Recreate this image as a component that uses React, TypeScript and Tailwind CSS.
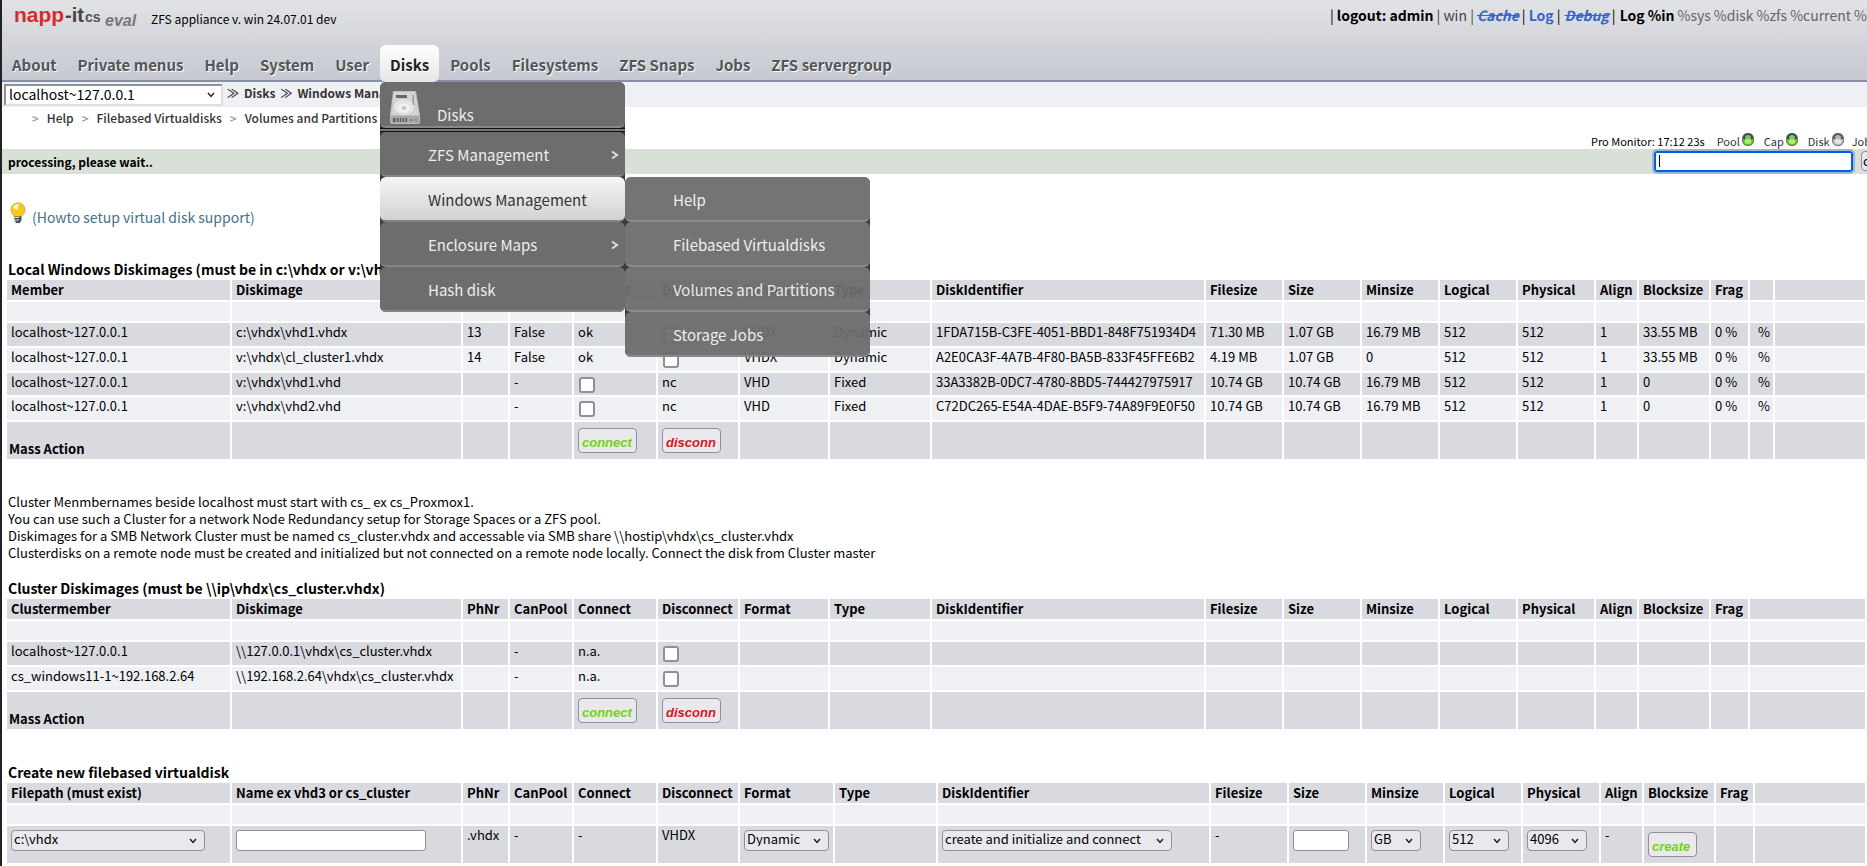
import type { ReactNode } from 'react'

const nav = ['About', 'Private menus', 'Help', 'System', 'User', 'Disks', 'Pools', 'Filesystems', 'ZFS Snaps', 'Jobs', 'ZFS servergroup']

const headers = ['PhNr', 'CanPool', 'Connect', 'Disconnect', 'Format', 'Type', 'DiskIdentifier', 'Filesize', 'Size', 'Minsize', 'Logical', 'Physical', 'Align', 'Blocksize', 'Frag']

const colsLocal = [223, 229, 45, 62, 82, 80, 88, 100, 272, 76, 76, 76, 76, 76, 41, 70, 37, 23]
const colsCreate = [223, 229, 45, 62, 82, 80, 93, 101, 271, 76, 76, 76, 76, 76, 41, 70, 37]

function Check({ name }: { name: string }) {
  return (
    <input
      type="checkbox"
      aria-label={name}
      className="block appearance-none w-4 h-4 mt-1 ml-px rounded-[3px] border-2 border-[#8f8f9d] bg-white"
    />
  )
}

function ImgButton({ label, style }: { label: string; style: string }) {
  return (
    <button
      className={`block h-[25px] pl-[3px] pt-1 text-left rounded border border-[#8f8f9d] bg-[#e9e9ed] font-['Liberation_Sans',sans-serif] text-[13px] leading-4 italic font-bold ${style}`}
    >
      {label}
    </button>
  )
}

function Grid({ cols, head, rows, rowHeights }: { cols: number[]; head: string[]; rows: ReactNode[][]; rowHeights: string[] }) {
  const cells = cols.length + 1
  return (
    <table className="table-fixed w-full border-separate border-spacing-[2px]">
      <colgroup>
        {cols.map((w, i) => (
          <col key={i} style={{ width: w }} />
        ))}
        <col />
      </colgroup>
      <thead>
        <tr className="h-5 bg-[#d9dae0]">
          {Array.from({ length: cells }).map((_, i) => (
            <th key={i} className="p-0 pl-1 text-left font-bold whitespace-nowrap">
              {head[i]}
            </th>
          ))}
        </tr>
      </thead>
      <tbody>
        <tr className="h-[19px] bg-[#eff0f4]">
          {Array.from({ length: cells }).map((_, i) => (
            <td key={i} className="p-0" />
          ))}
        </tr>
        {rows.map((row, r) => (
          <tr key={r} className={`${rowHeights[r]} ${r % 2 ? 'bg-[#eff0f4]' : 'bg-[#d9dae0]'}`}>
            {Array.from({ length: cells }).map((_, i) => (
              <td key={i} className="p-0 pl-1 align-top whitespace-nowrap">
                {row[i]}
              </td>
            ))}
          </tr>
        ))}
      </tbody>
    </table>
  )
}

function massRow(id: string): ReactNode[] {
  return [
    <b key={id} className="block -ml-0.5 pt-[18px]">Mass Action</b>,
    '', '', '',
    <div key="c" className="pt-[6px]"><ImgButton label="connect" style="w-[59px] text-[#73d216]" /></div>,
    <div key="d" className="pt-[6px]"><ImgButton label="disconn" style="w-[59px] text-[#d3181f]" /></div>,
  ]
}

const host = 'localhost~127.0.0.1'

const localRows: ReactNode[][] = [
  [host, 'c:\\vhdx\\vhd1.vhdx', '13', 'False', 'ok', <Check key="k" name="Disconnect vhd1.vhdx" />, 'VHDX', 'Dynamic', '1FDA715B-C3FE-4051-BBD1-848F751934D4', '71.30 MB', '1.07 GB', '16.79 MB', '512', '512', '1', '33.55 MB', '0 %', <span key="p" className="ml-1">%</span>],
  [host, 'v:\\vhdx\\cl_cluster1.vhdx', '14', 'False', 'ok', <Check key="k" name="Disconnect cl_cluster1.vhdx" />, 'VHDX', 'Dynamic', 'A2E0CA3F-4A7B-4F80-BA5B-833F45FFE6B2', '4.19 MB', '1.07 GB', '0', '512', '512', '1', '33.55 MB', '0 %', <span key="p" className="ml-1">%</span>],
  [host, 'v:\\vhdx\\vhd1.vhd', '', '-', <Check key="k" name="Connect vhd1.vhd" />, 'nc', 'VHD', 'Fixed', '33A3382B-0DC7-4780-8BD5-744427975917', '10.74 GB', '10.74 GB', '16.79 MB', '512', '512', '1', '0', '0 %', <span key="p" className="ml-1">%</span>],
  [host, 'v:\\vhdx\\vhd2.vhd', '', '-', <Check key="k" name="Connect vhd2.vhd" />, 'nc', 'VHD', 'Fixed', 'C72DC265-E54A-4DAE-B5F9-74A89F9E0F50', '10.74 GB', '10.74 GB', '16.79 MB', '512', '512', '1', '0', '0 %', <span key="p" className="ml-1">%</span>],
  massRow('local'),
]

const clusterRows: ReactNode[][] = [
  [host, '\\\\127.0.0.1\\vhdx\\cs_cluster.vhdx', '', '-', 'n.a.', <Check key="k" name="Disconnect 127.0.0.1" />],
  ['cs_windows11-1~192.168.2.64', '\\\\192.168.2.64\\vhdx\\cs_cluster.vhdx', '', '-', 'n.a.', <Check key="k" name="Disconnect 192.168.2.64" />],
  massRow('cluster'),
]

function Chevron() {
  return (
    <svg viewBox="0 0 8 6" className="absolute right-2 top-2 w-2 h-1.5 pointer-events-none" fill="none" stroke="#222" strokeWidth="1.5">
      <path d="M1 1l3 3.4L7 1" />
    </svg>
  )
}

function Pick({ value, label, width }: { value: string; label: string; width: string }) {
  return (
    <div className={`relative mt-1 h-[21px] ${width}`}>
      <select
        aria-label={label}
        defaultValue={value}
        className="block appearance-none w-full h-full pl-0.5 pb-1 rounded border border-[#8f8f9d] bg-[#e9e9ed] leading-4"
      >
        <option>{value}</option>
      </select>
      <Chevron />
    </div>
  )
}

const createRows: ReactNode[][] = [
  [
    <Pick key="a" value="c:\vhdx" label="Filepath" width="w-[194px]" />,
    <input key="b" aria-label="Name" className="block mt-1 w-[190px] h-[21px] rounded-[3px] border border-[#8f8f9d] bg-white px-1" />,
    '.vhdx', '-', '-', 'VHDX',
    <Pick key="c" value="Dynamic" label="Format" width="w-[85px]" />,
    '',
    <Pick key="d" value="create and initialize and connect" label="Action" width="w-[230px]" />,
    '-',
    <input key="e" aria-label="Size" className="block mt-1 w-14 h-[21px] rounded-[3px] border border-[#8f8f9d] bg-white px-1" />,
    <Pick key="f" value="GB" label="Unit" width="w-[50px]" />,
    <Pick key="g" value="512" label="Logical sector" width="w-[60px]" />,
    <Pick key="h" value="4096" label="Physical sector" width="w-[60px]" />,
    '-',
    <div key="i" className="pt-[6px]"><ImgButton label="create" style="w-[49px] text-[#73d216]" /></div>,
  ],
]

function DiskIcon() {
  return (
    <svg viewBox="0 0 32 36" className="w-8 h-9">
      <path d="M4 1h23l4 24v7q0 2-2 2H3q-2 0-2-2v-7z" fill="#bdbdbd" />
      <path d="M5 2h21l4 23H2z" fill="#d4d4d4" />
      <ellipse cx="15" cy="17" rx="11" ry="8.5" fill="#e4e4e4" stroke="#c2c2c2" strokeWidth=".8" />
      <ellipse cx="15" cy="18" rx="6" ry="4.5" fill="#f2f2f2" />
      <ellipse cx="15" cy="18" rx="2.5" ry="2" fill="#c4c4c4" />
      <path d="M7 5h11v3H7z" fill="#666" />
      <path d="M24 5l.5 10" stroke="#999" strokeWidth="1.5" fill="none" />
      <path d="M2 26h28v7H2z" fill="#a8a8a8" />
      <path d="M4 28h14v4H4z" fill="#5c5c5c" />
      <path d="M7 28v4M10 28v4M13 28v4M16 28v4" stroke="#c4c4c4" />
      <path d="M21 30h3" stroke="#666" />
      <circle cx="27" cy="30" r="1.2" fill="#5aa95a" />
    </svg>
  )
}

function Bulb() {
  return (
    <svg viewBox="0 0 16 22" className="w-4 h-[22px]">
      <path d="M8 .8a7 7 0 0 0-7 7c0 3 2 4.5 3.400 7h7.200C13 12.300 15 10.800 15 7.800a7 7 0 0 0-7-7z" fill="#f7c91c" stroke="#c9a23a" strokeWidth=".8" />
      <path d="M3 6a5 4.500 0 0 1 6-4L7.500 8z" fill="#fff6c0" />
      <path d="M4.500 14.500h7V18L10 21H6l-1.500-3z" fill="#4a4f5a" />
      <path d="M5 15.500h4M5 18h4" stroke="#d5d8de" />
    </svg>
  )
}

function Led({ on }: { on: boolean }) {
  return (
    <svg viewBox="0 0 12 13" className="w-3 h-[13px]">
      <rect x=".5" y=".5" width="11" height="12" rx="4.5" fill={on ? '#58c322' : '#b9b9bd'} stroke="#777" />
      <path d="M1 6V5a5 4.500 0 0 1 10 0v1z" fill={on ? '#34502b' : '#56565a'} />
      <ellipse cx="6" cy="4.500" rx="3" ry="2.500" fill={on ? '#8fb97c' : '#b5b5b8'} />
      <ellipse cx="6" cy="8.500" rx="3.500" ry="2.500" fill={on ? '#a6ef6a' : '#e4e4e8'} />
    </svg>
  )
}

const menu = [
  { label: 'ZFS Management', sub: true },
  { label: 'Windows Management', active: true },
  { label: 'Enclosure Maps', sub: true },
  { label: 'Hash disk' },
]

const submenu = ['Help', 'Filebased Virtualdisks', 'Volumes and Partitions', 'Storage Jobs']

function DisksMenu() {
  return (
    <div className="absolute z-10 left-0 top-full flex items-start font-normal text-[#eee] [text-shadow:none]">
      <div className="w-[245px] rounded-md bg-[#3a3a3a]">
        <div className="h-[46px] pl-[9px] flex items-end gap-4 rounded-md border-b-2 border-[#888] bg-[#6d6d6d]">
          <DiskIcon />
          <a href="#disks" className="leading-[22px]">Disks</a>
        </div>
        <div className="h-1 border-y border-[#111] bg-[#777]" />
        {menu.map((m) => (
          <a
            key={m.label}
            href="#menu"
            className={`flex items-center justify-between h-[45px] pt-0.5 pl-12 pr-1.5 rounded-md border-b-2 border-[#858585] ${
              m.active ? 'bg-linear-to-b from-[#f6f6f6] to-[#d2d2d2] text-[#333]' : 'bg-[#6d6d6d]'
            }`}
          >
            {m.label}
            {m.sub && (
              <svg viewBox="0 0 8 10" className="w-2 h-2.5" fill="none" stroke="#ddd" strokeWidth="2">
                <path d="M1 1.500L6 5 1 8.500" />
              </svg>
            )}
          </a>
        ))}
      </div>
      <div className="w-[245px] mt-[95px] rounded-md bg-[#333] opacity-95">
        {submenu.map((s) => (
          <a key={s} href="#submenu" className="flex items-center h-[45px] pt-0.5 pl-12 rounded-md border-b-2 border-[#858585] bg-[#6d6d6d]">
            {s}
          </a>
        ))}
      </div>
    </div>
  )
}

export default function App() {
  return (
    <div className="h-screen overflow-hidden border-l-2 border-[#222226] bg-white font-['Noto_Sans_CJK_SC',sans-serif] text-[13px] leading-[18px] text-black">
      <header className="h-[82px] flex flex-col justify-between border-b-2 border-[#8990a5] bg-linear-to-b from-[#e2e3e6] to-[#c5c8d1]">
        <div className="flex justify-between">
          <div className="flex items-start pl-3 pt-1.5">
            <svg viewBox="0 0 124 26" className="w-[124px] h-[26px] overflow-visible" fontFamily="Liberation Sans" fontWeight="bold">
              <text x="0" y="16" fontSize="21" fill="#d92b2b">napp</text>
              <text x="51" y="16" fontSize="20" fill="#444">-it</text>
              <text x="71" y="16" fontSize="14" fill="#555">cs</text>
              <text x="91" y="20" fontSize="16" fontStyle="italic" fill="#777">eval</text>
            </svg>
            <span className="ml-[13px] mt-1 text-xs leading-[18px]">ZFS appliance v. win 24.07.01 dev</span>
          </div>
          <div className="w-[537px] pt-1.5 flex gap-[3px] overflow-hidden whitespace-nowrap text-sm leading-[18px] text-[#666]">
            <span className="text-black">|</span>
            <a href="#logout" className="font-bold text-black">logout: admin</a>
            <span className="text-[#444]">| win |</span>
            <a href="#cache" className="font-bold italic line-through text-[#3366cc]">Cache</a>
            <span className="text-black">|</span>
            <a href="#log" className="font-bold text-[#3366cc]">Log</a>
            <span className="mr-px text-black">|</span>
            <a href="#debug" className="font-bold italic line-through text-[#3366cc]">Debug</a>
            <span className="mr-px text-black">|</span>
            <b className="text-black">Log %in</b>
            <span>%sys</span>
            <span>%disk</span>
            <span>%zfs</span>
            <span>%current</span>
            <span>%max</span>
          </div>
        </div>
        <nav className="flex gap-px h-[35px] text-[15px] font-bold text-[#555] [text-shadow:1px_1px_1px_#fff]">
          {nav.map((n) =>
            n === 'Disks' ? (
              <div key={n} className="relative h-[37px]">
                <a href="#nav" className="flex items-center h-full pt-0.5 px-2.5 rounded-md bg-linear-to-b from-white to-[#e6e6e6] text-[#222]">{n}</a>
                <DisksMenu />
              </div>
            ) : (
              <a key={n} href="#nav" className="flex items-center h-[37px] pt-0.5 px-2.5">{n}</a>
            ),
          )}
        </nav>
      </header>

      <div className="h-[25px] flex items-start bg-[#eff0f4] text-xs leading-[18px] text-[#333]">
        <div className="relative ml-0.5 mt-0.5 w-[219px] h-[22px]">
          <select aria-label="Host" defaultValue={host} className="block appearance-none w-full h-full pl-[3px] pb-1 border-2 border-[#8f8f9d] border-r-[#e0e0e4] border-b-[#e0e0e4] bg-white text-sm leading-4 text-black">
            <option>{host}</option>
          </select>
          <Chevron />
        </div>
        <div className="ml-1 pt-0.5 flex gap-[5px] font-bold whitespace-nowrap">
          <span>≫</span>
          <a href="#disks">Disks</a>
          <span>≫</span>
          <a href="#windows">Windows Management</a>
        </div>
      </div>

      <div className="h-[26px] pl-[30px] pt-0.5 flex gap-2 text-xs leading-[18px] font-medium text-[#333]">
        <span className="text-[#999]">&gt;</span>
        <a href="#help">Help</a>
        <span className="text-[#999]">&gt;</span>
        <a href="#virtualdisks">Filebased Virtualdisks</a>
        <span className="text-[#999]">&gt;</span>
        <a href="#volumes">Volumes and Partitions</a>
      </div>

      <div className="h-4 flex justify-end text-[11px] leading-4">
        <div className="w-[276px] flex overflow-hidden whitespace-nowrap text-[#333]">
          <span className="mr-3 text-black">Pro Monitor: 17:12 23s</span>
          <span className="mr-2.5 flex gap-0.5">Pool<Led on /></span>
          <span className="mr-2.5 flex gap-0.5">Cap<Led on /></span>
          <span className="mr-2 flex gap-0.5">Disk<Led on={false} /></span>
          <span>Job</span>
        </div>
      </div>
      <div className="h-[25px] flex items-center justify-between bg-[#d9e0d8] overflow-hidden">
        <b className="pl-1.5 text-xs">processing, please wait..</b>
        <div className="w-[215px] flex gap-2 overflow-hidden py-0.5 pl-0.5">
          <div className="relative w-[199px] shrink-0">
            <input aria-label="Command" className="block w-full h-[21px] px-1 rounded-[3px] border-2 border-[#0060df] bg-white outline-2 outline-[#9cb6d8]" />
            <span className="absolute left-[5px] top-1 w-px h-3 bg-black" />
          </div>
          <button className="shrink-0 h-5 px-px rounded border border-[#8f8f9d] bg-[#e9e9ed] leading-4">cmd</button>
        </div>
      </div>

      <div className="h-[84px] flex items-start pt-7 pl-2 text-sm leading-[18px] text-[#45718a]">
        <Bulb />
        <a href="#howto" className="ml-1.5 mt-1.5">(Howto setup virtual disk support)</a>
      </div>

      <main className="pl-[3px]">
        <h2 className="pl-[3px] pt-0.5 h-5 text-sm leading-[18px] font-bold">Local Windows Diskimages (must be in c:\vhdx or v:\vhdx)</h2>
        <Grid cols={colsLocal} head={['Member', 'Diskimage', ...headers]} rows={localRows} rowHeights={['h-[23px]', 'h-[23px]', 'h-[22px]', 'h-[23px]', 'h-[37px]']} />

        <p className="pl-[3px] mt-8 whitespace-pre-line leading-[17px]">
          {'Cluster Menmbernames beside localhost must start with cs_ ex cs_Proxmox1.\nYou can use such a Cluster for a network Node Redundancy setup for Storage Spaces or a ZFS pool.\nDiskimages for a SMB Network Cluster must be named cs_cluster.vhdx and accessable via SMB share \\\\hostip\\vhdx\\cs_cluster.vhdx\nClusterdisks on a remote node must be created and initialized but not connected on a remote node locally. Connect the disk from Cluster master'}
        </p>

        <h2 className="pl-[3px] pt-0.5 mt-4 h-5 text-sm leading-[18px] font-bold">Cluster Diskimages (must be \\ip\vhdx\cs_cluster.vhdx)</h2>
        <Grid cols={colsLocal.slice(0, 17)} head={['Clustermember', 'Diskimage', ...headers]} rows={clusterRows} rowHeights={['h-[23px]', 'h-[23px]', 'h-[37px]']} />

        <h2 className="pl-[3px] pt-0.5 mt-[30px] h-5 text-sm leading-[18px] font-bold">Create new filebased virtualdisk</h2>
        <Grid cols={colsCreate} head={['Filepath (must exist)', 'Name ex vhd3 or cs_cluster', ...headers]} rows={createRows} rowHeights={['h-[37px]']} />
      </main>
    </div>
  )
}
